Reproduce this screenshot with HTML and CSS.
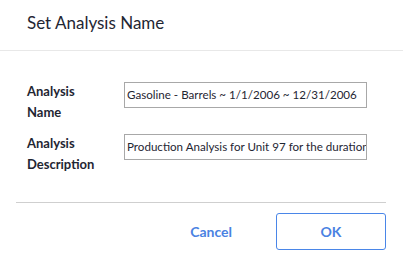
FILE: index.html
```html
<!DOCTYPE html>
<html>
<head>
<meta charset="utf-8">
<link rel="stylesheet" href="styles.css">
</head>
<body>
<div class="dialog">
  <div class="header">Set Analysis Name</div>
  <div class="body">
    <div class="row">
      <div class="label">Analysis<br>Name</div>
      <div class="field">Gasoline - Barrels ~ 1/1/2006 ~ 12/31/2006</div>
    </div>
    <div class="row">
      <div class="label">Analysis<br>Description</div>
      <div class="field">Production Analysis for Unit 97 for the duration of 2006</div>
    </div>
  </div>
  <div class="footer">
    <button class="btn cancel">Cancel</button>
    <button class="btn ok">OK</button>
  </div>
</div>
</body>
</html>
```
FILE: styles.css
```css
html, body {
  margin: 0;
  padding: 0;
  background: #fff;
}
.dialog {
  width: 403px;
  height: 261px;
  font-family: "Lato", "Open Sans", sans-serif;
  color: #1f2633;
}
.header {
  height: 51px;
  box-sizing: border-box;
  padding: 12px 0 0 27px;
  font-size: 17px;
  border-bottom: 1px solid #e8e8e8;
}
.body {
  margin: 0 17px 0 16px;
  padding: 31px 0 0 11px;
  height: 152px;
  box-sizing: border-box;
  border-bottom: 1px solid #cfcfcf;
  display: flex;
  flex-direction: column;
  gap: 26px;
}
.row {
  display: flex;
  align-items: flex-start;
  height: 26px;
}
.label {
  width: 97px;
  flex: none;
  font-weight: 700;
  font-size: 13px;
  line-height: 21px;
  margin-top: -1px;
}
.field {
  width: 243px;
  height: 26px;
  box-sizing: border-box;
  border: 1px solid #a8a8a8;
  font-size: 11.6px;
  line-height: 24px;
  padding-left: 2px;
  white-space: nowrap;
  overflow: hidden;
}
.footer {
  display: flex;
  justify-content: flex-end;
  align-items: center;
  gap: 44px;
  padding: 10px 17px 0 0;
}
.btn {
  font-family: "Lato", "Open Sans", sans-serif;
  font-weight: 700;
  font-size: 14px;
  color: #4a82e2;
  background: #fff;
  border: none;
}
.cancel {
  padding: 0;
}
.ok {
  width: 110px;
  height: 37px;
  border: 1px solid #4a86e8;
  border-radius: 3px;
}
```
